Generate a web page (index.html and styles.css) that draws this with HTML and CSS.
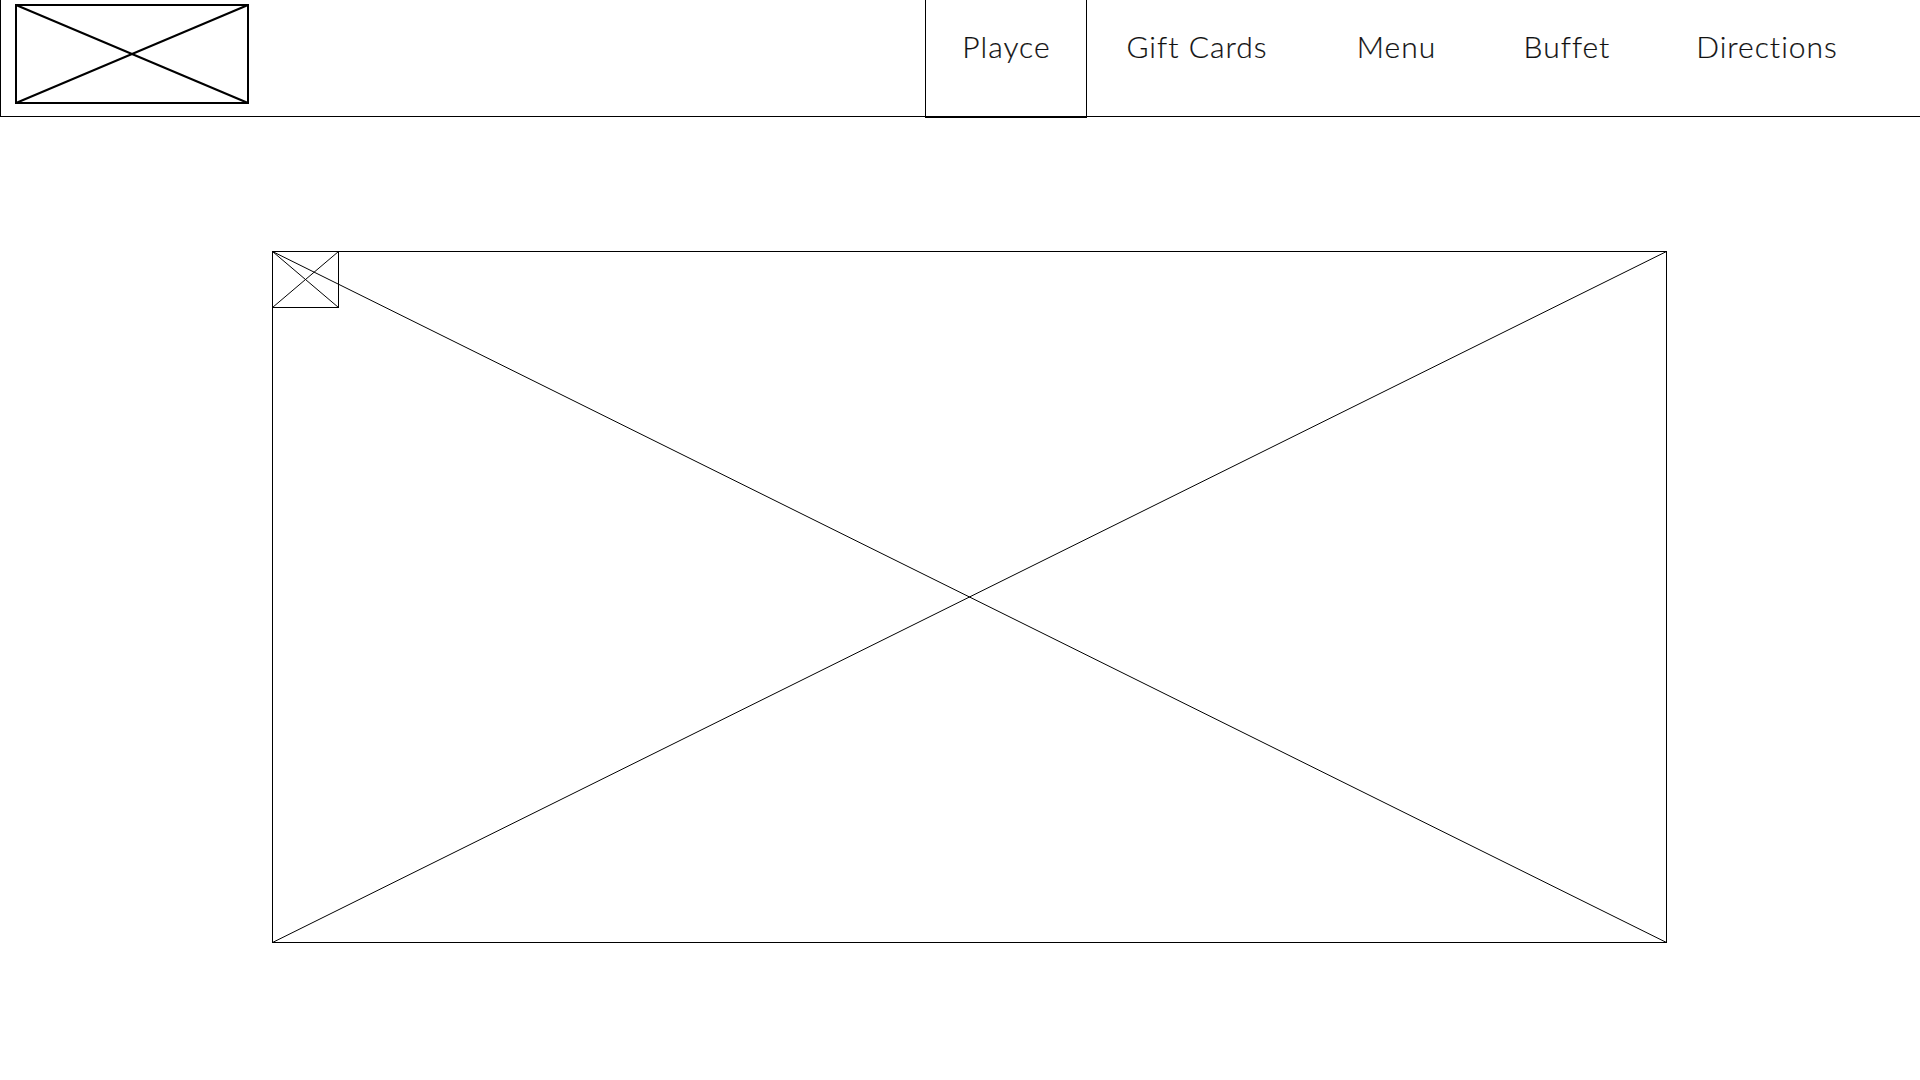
FILE: index.html
```html
<!DOCTYPE html>
<html lang="en">
<head>
<meta charset="utf-8">
<title>Playce</title>
<link rel="stylesheet" href="styles.css">
</head>
<body>
<header class="header">
  <a class="logo" href="#">
    <svg class="logo-svg" width="234" height="100" viewBox="0 0 234 100">
      <rect x="1" y="1" width="232" height="98" fill="none" stroke="#000" stroke-width="2"/>
      <line x1="1" y1="1" x2="233" y2="99" stroke="#000" stroke-width="2"/>
      <line x1="1" y1="99" x2="233" y2="1" stroke="#000" stroke-width="2"/>
    </svg>
  </a>
  <nav class="nav">
    <a class="nav-item nav-active w-playce" href="#">Playce</a>
    <a class="nav-item w-gift" href="#">Gift Cards</a>
    <a class="nav-item w-menu" href="#">Menu</a>
    <a class="nav-item w-buffet" href="#">Buffet</a>
    <a class="nav-item w-dir" href="#">Directions</a>
  </nav>
</header>
<main class="main">
  <svg class="hero" width="1395" height="692" viewBox="0 0 1395 692">
    <rect x="0.5" y="0.5" width="1394" height="691" fill="none" stroke="#000" stroke-width="1"/>
    <line x1="0.5" y1="0.5" x2="1394.5" y2="691.5" stroke="#000" stroke-width="1"/>
    <line x1="0.5" y1="691.5" x2="1394.5" y2="0.5" stroke="#000" stroke-width="1"/>
    <rect x="0.5" y="0.5" width="66" height="56" fill="none" stroke="#000" stroke-width="1"/>
    <line x1="0.5" y1="0.5" x2="66.5" y2="56.5" stroke="#000" stroke-width="1"/>
    <line x1="0.5" y1="56.5" x2="66.5" y2="0.5" stroke="#000" stroke-width="1"/>
  </svg>
</main>
</body>
</html>
```
FILE: styles.css
```css
* { box-sizing: border-box; }
html, body { margin: 0; padding: 0; background: #fff; }
body { font-family: "Lato", "Open Sans", sans-serif; color: #111; }

.header {
  display: flex;
  align-items: flex-start;
  height: 117px;
  border-left: 1px solid #000;
  border-bottom: 1px solid #000;
}
.logo { display: block; margin: 4px 0 0 14px; }
.logo-svg { display: block; }

.nav { display: flex; margin-left: auto; margin-right: 34px; }
.nav-item {
  display: block;
  height: 116px;
  padding-top: 26px;
  padding-left: 1px;
  font-size: 30px;
  font-weight: 300;
  letter-spacing: 1px;
  line-height: 40px;
  text-align: center;
  color: #111;
  text-decoration: none;
  -webkit-text-stroke: 0.2px #111;
}
.nav-active {
  height: 118px;
  border-left: 1px solid #000;
  border-right: 1px solid #000;
  border-bottom: 2px solid #000;
}
.w-playce { width: 162px; }
.w-gift { width: 219px; }
.w-menu { width: 180px; }
.w-buffet { width: 161px; }
.w-dir { width: 239px; }

.main { padding: 134px 0 0 272px; }
.hero { display: block; }
```
